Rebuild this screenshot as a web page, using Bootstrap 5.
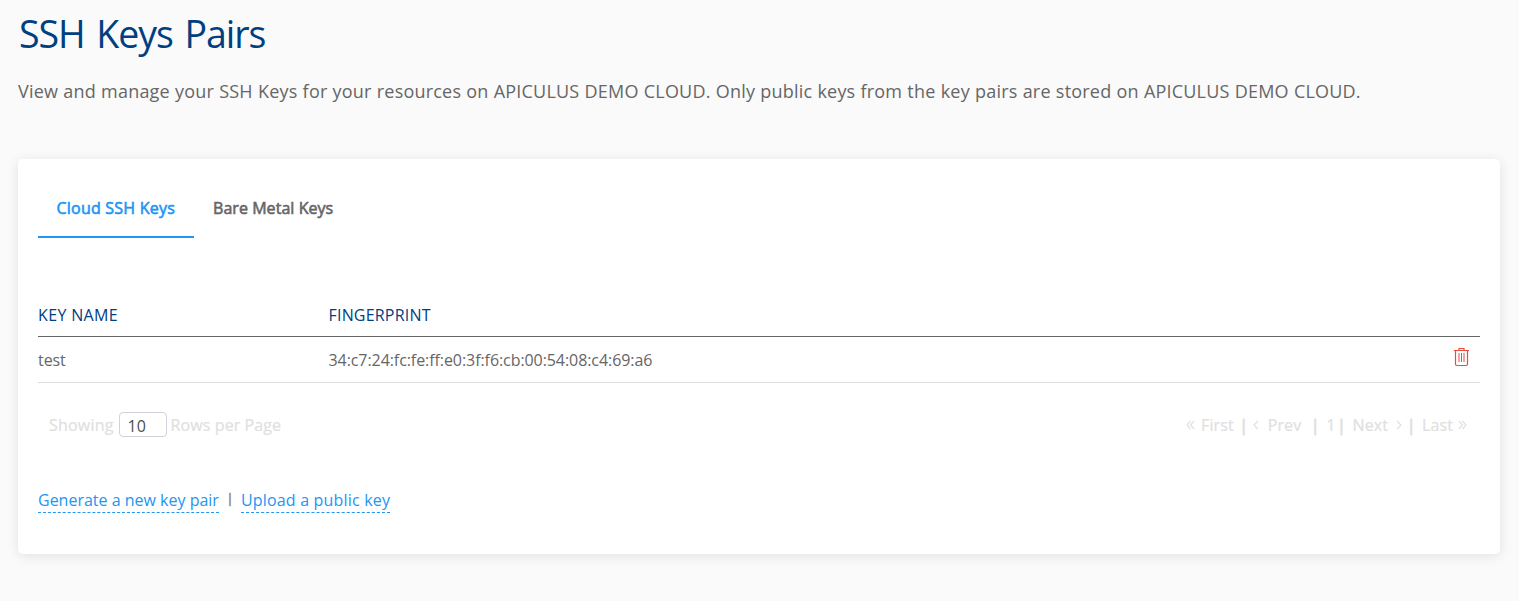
<!DOCTYPE html>
<html lang="en">
<head>
<meta charset="utf-8">
<meta name="viewport" content="width=device-width, initial-scale=1">
<title>SSH Keys Pairs</title>
<link rel="stylesheet" href="https://cdn.jsdelivr.net/npm/bootstrap@5.3.0/dist/css/bootstrap.min.css">
<style>
  body { background: #fafafa; color: #666; font-family: "Segoe UI", "Open Sans", "Noto Sans", sans-serif; font-size: 16px; line-height: 24px; }
  .page { padding: 10px 19px 0 18px; min-height: 100vh; }
  .page-title { color: #004080; font-size: 37.5px; line-height: 48px; font-weight: 400; letter-spacing: -1.05px; word-spacing: 3px; padding-left: 1px; }
  .intro { font-size: 18px; line-height: 27px; margin: 20px 0 54px; white-space: nowrap; letter-spacing: .2px; word-spacing: .27px; }
  .panel { height: 395px; padding: 20px; border: 0; border-radius: 5px; box-shadow: 0 2px 12px rgba(0,0,0,.1); }
  .key-tabs .nav-link { color: #666; padding: 17px 19px 16px; line-height: 24px; border-bottom: 2px solid transparent; border-radius: 0; -webkit-text-stroke: .6px; letter-spacing: .05px; white-space: nowrap; }
  .key-tabs .nav-link.active { color: #2196f3; border-color: #2196f3; letter-spacing: .22px; padding-left: 18.5px; }
  .keys { margin: 55px 0 0; table-layout: fixed; color: #666; }
  .keys > thead th { color: #004080; font-weight: 400; padding: 10px 0 9px; border-bottom: 1px solid #666; background: none; letter-spacing: .2px; }
  .keys > thead .c-name { width: 290.5px; letter-spacing: .35px; }
  .keys > tbody td { color: #666; padding: 11px 0 10px; border-bottom: 1px solid #ddd; background: none; letter-spacing: -.075px; }
  .c-action { width: 80px; }
  .trash { display: block; margin: -1px 10px -1px auto; }
  .pager { color: #e0e0e0; margin-top: 29px; height: 25px; padding: 0 13px 0 11px; white-space: nowrap; letter-spacing: .1px; -webkit-text-stroke: .2px; }
  .pager .rows { width: 48px; height: 25px; padding: 2px 8px 0; margin: 0 4px 0 5px; font-size: 16px; line-height: 22px; color: #495057; border-color: #ced4da; border-radius: 4px; -webkit-text-stroke: 0; }
  .showing { letter-spacing: .2px; }
  .pager-links > svg { margin-top: 1px; }
  .pipe { font-size: 16px; -webkit-text-stroke: .8px; width: 2px; display: flex; justify-content: center; letter-spacing: 0; }
  .go-first { margin: 0 9px 0 6px; }
  .go-prev { margin: 0 13px 0 9px; }
  .go-page { margin: 0 5px 0 10px; }
  .go-next { margin: 0 8px 0 10px; }
  .go-last { margin: 0 5px 0 10px; }
  .actions { margin-top: 51px; line-height: 24px; }
  .actions a { color: #2196f3; text-decoration: none; border-bottom: 1px dashed #2196f3; height: 25px; }
  .actions a:last-child { letter-spacing: .19px; }
  .divider { width: 2px; color: #888; margin: -2px 10px 0; font-size: 13.5px; -webkit-text-stroke: .5px; display: flex; justify-content: center; }
</style>
</head>
<body>
<main class="page">
  <h1 class="page-title mb-0">SSH Keys Pairs</h1>
  <p class="intro">View and manage your SSH Keys for your resources on APICULUS DEMO CLOUD. Only public keys from the key pairs are stored on APICULUS DEMO CLOUD.</p>
  <section class="card panel">
    <ul class="nav key-tabs">
      <li class="nav-item"><a class="nav-link active" href="#">Cloud SSH Keys</a></li>
      <li class="nav-item"><a class="nav-link" href="#">Bare Metal Keys</a></li>
    </ul>
    <table class="table keys">
      <thead><tr><th class="c-name">KEY NAME</th><th>FINGERPRINT</th><th class="c-action"></th></tr></thead>
      <tbody><tr>
        <td>test</td>
        <td>34:c7:24:fc:fe:ff:e0:3f:f6:cb:00:54:08:c4:69:a6</td>
        <td><svg class="trash" width="17" height="20" viewBox="0 0 17 20" fill="none" stroke="#e74c3c" stroke-width="1.2"><path d="M1 3.5h15M6 3V1.5h5V3M2.5 4v13q0 1.5 1.5 1.5h9q1.5 0 1.5-1.5V4"/><path stroke-width="1" d="M6 6v9M8.5 6v9M11 6v9"/></svg></td>
      </tr></tbody>
    </table>
    <div class="pager d-flex align-items-center justify-content-between">
      <div class="d-flex align-items-center"><span class="showing">Showing</span><input class="form-control rows" value="10" aria-label="Rows per page"><span>Rows per Page</span></div>
      <div class="pager-links d-flex align-items-center">
        <svg width="9" height="10" viewBox="0 0 9 10" fill="none" stroke="currentColor" stroke-width="1.2"><path d="M4.5 1L1 5l3.5 4M8 1L4.5 5 8 9"/></svg>
        <span class="go-first">First</span><span class="pipe">|</span>
        <svg class="ms-2" width="6" height="10" viewBox="0 0 6 10" fill="none" stroke="currentColor" stroke-width="1.2"><path d="M5 1L1 5l4 4"/></svg>
        <span class="go-prev">Prev</span><span class="pipe">|</span>
        <span class="go-page">1</span><span class="pipe">|</span>
        <span class="go-next">Next</span>
        <svg width="6" height="10" viewBox="0 0 6 10" fill="none" stroke="currentColor" stroke-width="1.2"><path d="M1 1l4 4-4 4"/></svg>
        <span class="pipe ms-2">|</span><span class="go-last">Last</span>
        <svg width="9" height="10" viewBox="0 0 9 10" fill="none" stroke="currentColor" stroke-width="1.2"><path d="M1 1l3.5 4L1 9M4.5 1L8 5 4.5 9"/></svg>
      </div>
    </div>
    <div class="actions d-flex"><a href="#">Generate a new key pair</a><span class="divider">|</span><a href="#">Upload a public key</a></div>
  </section>
</main>
<script src="https://cdn.jsdelivr.net/npm/bootstrap@5.3.0/dist/js/bootstrap.bundle.min.js"></script>
</body>
</html>
